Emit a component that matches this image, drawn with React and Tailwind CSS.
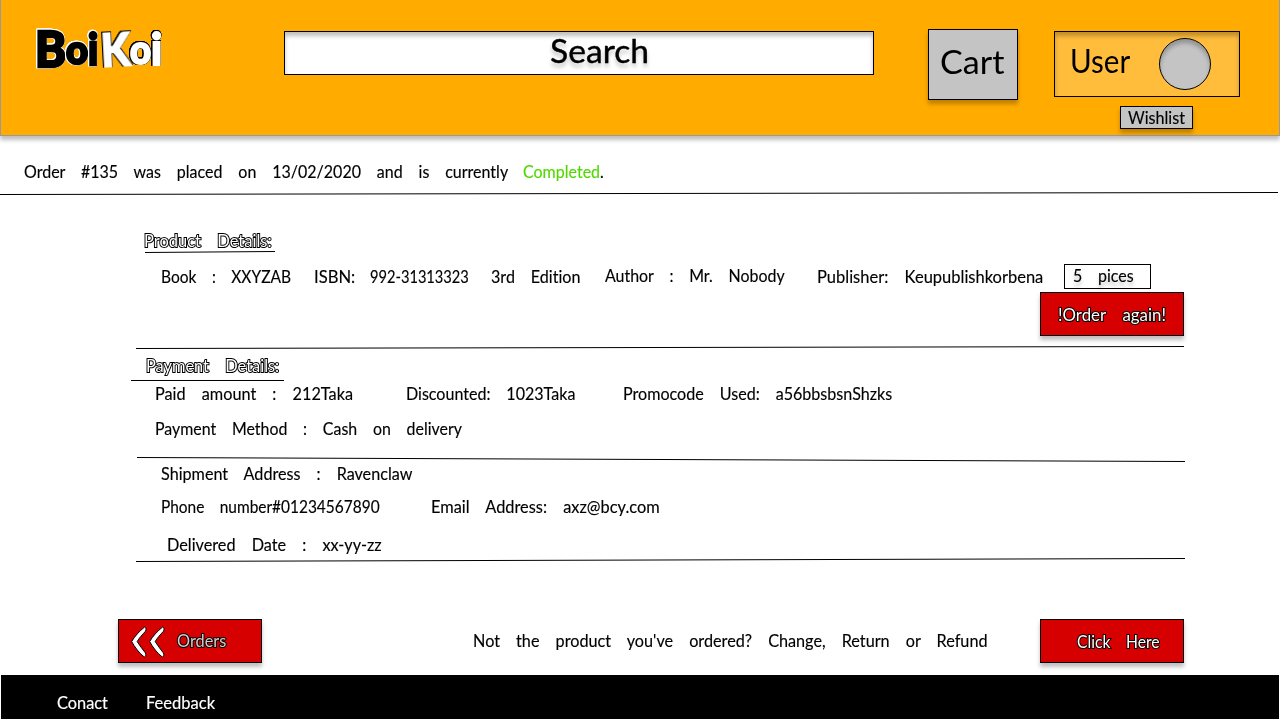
import { useLayoutEffect, useRef, useState } from 'react';
import clsx from 'clsx';

// Text condensed or widened horizontally so that it fills a given width.
function Fit({ width, className, textClass, children }) {
  const ref = useRef(null);
  const [scale, setScale] = useState(1);
  useLayoutEffect(() => {
    setScale(width / ref.current.offsetWidth);
  }, [width, children]);
  return (
    <span className={clsx('block shrink-0', className)} style={{ width }}>
      <span
        ref={ref}
        className={clsx('inline-block origin-left whitespace-pre align-top', textClass)}
        style={{ transform: `scaleX(${scale})` }}
      >
        {children}
      </span>
    </span>
  );
}

function Label({ width, className, textClass = 'pt-px [-webkit-text-stroke:0.15px_currentColor]', children }) {
  return (
    <Fit
      width={width}
      className={clsx('h-5 text-[17px] leading-5 [font-variant-ligatures:none] [word-spacing:12.5px]', className)}
      textClass={textClass}
    >
      {children}
    </Fit>
  );
}

const outlined = 'pt-px [-webkit-text-stroke:2px_#000] [paint-order:stroke_fill]';

function Rule({ className, width, height, y1, y2 }) {
  return (
    <svg className={clsx('block shrink-0', className)} width={width} height={height}>
      <line x1="0" y1={y1} x2={width} y2={y2} stroke="#000" strokeWidth="1" />
    </svg>
  );
}

function RedButton({ className, children }) {
  return (
    <button
      className={clsx(
        'flex h-11 w-36 shrink-0 items-start border border-black bg-[#d60000] text-left text-white shadow-[0_4px_4px_rgba(0,0,0,0.25)]',
        className,
      )}
    >
      {children}
    </button>
  );
}

function Logo() {
  const dark =
    'text-black [-webkit-text-stroke:2.5px_#000] [filter:drop-shadow(0.7px_0_0_#fff)_drop-shadow(-0.7px_0_0_#fff)_drop-shadow(0_0.7px_0_#fff)_drop-shadow(0_-0.7px_0_#fff)]';
  const light =
    'text-white [-webkit-text-stroke:2px_#fff] [filter:drop-shadow(0.7px_0_0_#000)_drop-shadow(-0.7px_0_0_#000)_drop-shadow(0_0.7px_0_#000)_drop-shadow(0_-0.7px_0_#000)]';
  return (
    <div className="ml-[34px] mt-6 flex h-12 w-[130px] font-black leading-[48px]">
      <Fit width={31} className="h-12 text-[50px]" textClass={dark}>B</Fit>
      <Fit width={22} className="mt-px h-12 text-[40px]" textClass={dark}>o</Fit>
      <Fit width={10} className="mt-px h-12 text-[43px]" textClass={dark}>i</Fit>
      <Fit width={29} className="ml-[3px] mt-px h-12 rotate-[-3deg] text-[46px]" textClass={light}>K</Fit>
      <Fit width={21} className="mt-px h-12 text-[40px]" textClass={light}>o</Fit>
      <Fit width={11} className="mt-px h-12 text-[43px]" textClass={light}>i</Fit>
    </div>
  );
}

function Header() {
  return (
    <header className="flex h-[136px] items-start border border-t-0 border-[#999] bg-[#ffab00] shadow-[0_4px_4px_rgba(0,0,0,0.25)]">
      <Logo />
      <div className="ml-[119px] mt-[31px] flex h-11 w-[590px] border border-black bg-white pl-[265px] shadow-[inset_0_4px_4px_rgba(0,0,0,0.25)]">
        <Fit
          width={99}
          className="-mt-0.5 text-[33px] leading-10"
          textClass="[text-shadow:0_4px_4px_rgba(0,0,0,0.25)] [-webkit-text-stroke:0.4px_#000]"
        >
          Search
        </Fit>
      </div>
      <button className="ml-[54px] mt-[29px] flex h-[71px] w-[90px] justify-center border border-black bg-[#c4c4c4] pt-3 shadow-[0_4px_4px_rgba(0,0,0,0.25)]">
        <Fit width={64} className="-ml-0.5 text-left text-[32px] leading-10">Cart</Fit>
      </button>
      <div className="ml-9 mt-[31px]">
        <div className="flex h-[66px] w-[186px] items-start border border-black bg-[#ffbd3b] shadow-[inset_0_4px_4px_rgba(0,0,0,0.25)]">
          <Fit width={60} className="ml-[15px] mt-2 text-[33px] leading-10">User</Fit>
          <div className="ml-[29px] mt-1.5 size-[52px] rounded-full border border-black bg-[#c4c4c4] shadow-[inset_0_4px_4px_rgba(0,0,0,0.25)]" />
        </div>
        <button className="ml-[66px] mt-[9px] flex h-[23px] w-[73px] border border-black bg-[#c4c4c4] pl-[7px] text-left shadow-[0_4px_4px_rgba(0,0,0,0.25)]">
          <Label width={57}>Wishlist</Label>
        </button>
      </div>
    </header>
  );
}

function Chevron() {
  return (
    <svg width="16" height="32" viewBox="0 0 16 32" className="block">
      <path
        d="M13.6 1C8.5 5 3.5 10.5 0.7 15.5C3.5 21 8.5 27.5 13.3 31C15 30.5 15.3 28.5 14.3 26.8C11.5 23 8.5 19.5 6.2 15.6C8.2 12 11.5 8.5 14.5 5.2C15.5 3.6 15.2 1.6 13.6 1Z"
        fill="#fff"
        stroke="#000"
        strokeWidth="1"
      />
    </svg>
  );
}

export default function App() {
  return (
    <div className="flex h-[720px] w-[1280px] flex-col overflow-hidden bg-white font-['Lato','Open_Sans',sans-serif] text-black">
      <Header />

      <main className="flex flex-col">
        <div className="mt-[25px] flex pl-6">
          <Label width={484}>Order #135 was placed on 13/02/2020 and is currently</Label>
          <Label width={81} className="ml-[15px]">
            <span className="text-[#52d800]">Completed</span>.
          </Label>
        </div>
        <Rule className="mt-2.5" width={1278} height={4} y1={3.5} y2={1.5} />

        <section>
          <Label width={128} className="ml-36 mt-[35px]" textClass={clsx('text-white', outlined)}>
            Product Details:
          </Label>
          <Rule className="ml-[145px]" width={130} height={4} y1={2.5} y2={1.5} />
          <div className="mt-2.5 flex h-[25px] pl-[161px]">
            <Label width={130} className="mt-0.5">Book : XXYZAB</Label>
            <Label width={41} className="ml-[23px] mt-0.5">ISBN:</Label>
            <Label width={99} className="ml-[15px] mt-0.5">992-31313323</Label>
            <Label width={89} className="ml-[22px] mt-0.5">3rd Edition</Label>
            <Label width={180} className="ml-[25px] mt-px">Author : Mr. Nobody</Label>
            <Label width={226} className="ml-8 mt-0.5">Publisher: Keupublishkorbena</Label>
            <div className="ml-[21px] flex h-[25px] w-[87px] shrink-0 border border-black pl-2">
              <Label
                width={61}
                textClass="pt-px [-webkit-text-stroke:0.15px_currentColor] [text-shadow:0_4px_4px_rgba(0,0,0,0.25)]"
              >
                5 pices
              </Label>
            </div>
          </div>
          <RedButton className="ml-[1040px] mt-[3px]">
            <Label width={108} className="ml-[17px] mt-[11px]" textClass={outlined}>!Order again!</Label>
          </RedButton>
          <Rule className="ml-[136px] mt-[9px]" width={1048} height={4} y1={3.5} y2={1.5} />
        </section>

        <section>
          <Label width={133} className="ml-[146px] mt-1.5" textClass={clsx('text-white', outlined)}>
            Payment Details:
          </Label>
          <Rule className="ml-[131px] mt-1" width={153} height={3} y1={1.5} y2={1.5} />
          <div className="mt-px flex pl-[155px]">
            <Label width={198}>Paid amount : 212Taka</Label>
            <Label width={169} className="ml-[53px]">Discounted: 1023Taka</Label>
            <Label width={269} className="ml-12">Promocode Used: a56bbsbsnShzks</Label>
          </div>
          <Label width={307} className="ml-[155px] mt-[15px]">Payment Method : Cash on delivery</Label>
          <Rule className="ml-[137px] mt-[18px]" width={1048} height={7} y1={1.5} y2={5.5} />
        </section>

        <section>
          <Label width={251} className="ml-[161px]">Shipment Address : Ravenclaw</Label>
          <div className="mt-[13px] flex pl-[161px]">
            <Label width={219}>Phone number#01234567890</Label>
            <Label width={229} className="ml-[51px]">Email Address: axz@bcy.com</Label>
          </div>
          <Label width={215} className="ml-[167px] mt-[18px]">Delivered Date : xx-yy-zz</Label>
          <Rule className="ml-[136px] mt-[3px]" width={1049} height={6} y1={4.5} y2={1.5} />
        </section>

        <div className="mt-14 flex h-11 pl-[118px]">
          <RedButton>
            <span className="ml-3 mt-1.5 flex gap-0.5">
              <Chevron />
              <Chevron />
            </span>
            <Label width={49} className="ml-3 mt-2.5" textClass={clsx('text-[#d0d0d0]', outlined)}>
              Orders
            </Label>
          </RedButton>
          <Label width={515} className="ml-[211px] mt-[11px]">
            Not the product you've ordered? Change, Return or Refund
          </Label>
          <RedButton className="ml-[52px]">
            <Label width={83} className="ml-9 mt-[11px]" textClass={outlined}>Click Here</Label>
          </RedButton>
        </div>
      </main>

      <footer className="ml-px mt-3 flex h-11 w-[1278px] bg-black pl-14 pt-[17px] text-white">
        <Label width={51}>Conact</Label>
        <Label width={69} className="ml-[38px]">Feedback</Label>
      </footer>
    </div>
  );
}
